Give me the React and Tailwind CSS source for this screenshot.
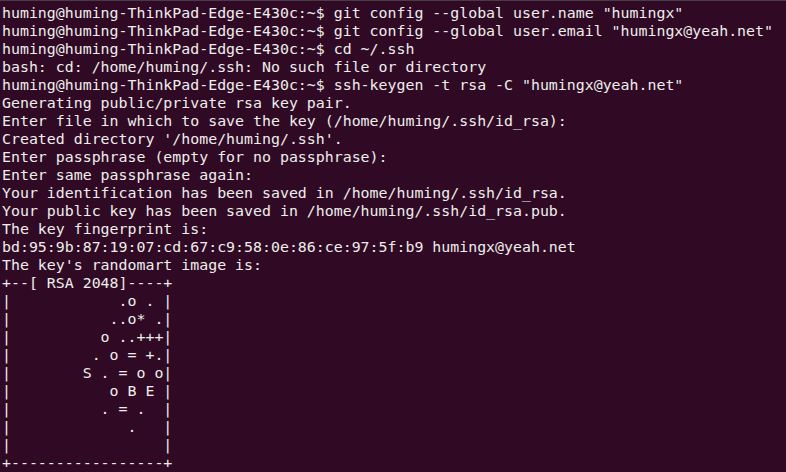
import React from 'react';

const lines = [
  'huming@huming-ThinkPad-Edge-E430c:~$ git config --global user.name "humingx"',
  'huming@huming-ThinkPad-Edge-E430c:~$ git config --global user.email "humingx@yeah.net"',
  'huming@huming-ThinkPad-Edge-E430c:~$ cd ~/.ssh',
  'bash: cd: /home/huming/.ssh: No such file or directory',
  'huming@huming-ThinkPad-Edge-E430c:~$ ssh-keygen -t rsa -C "humingx@yeah.net"',
  'Generating public/private rsa key pair.',
  'Enter file in which to save the key (/home/huming/.ssh/id_rsa):',
  "Created directory '/home/huming/.ssh'.",
  'Enter passphrase (empty for no passphrase):',
  'Enter same passphrase again:',
  'Your identification has been saved in /home/huming/.ssh/id_rsa.',
  'Your public key has been saved in /home/huming/.ssh/id_rsa.pub.',
  'The key fingerprint is:',
  'bd:95:9b:87:19:07:cd:67:c9:58:0e:86:ce:97:5f:b9 humingx@yeah.net',
  "The key's randomart image is:",
  '+--[ RSA 2048]----+',
  '|            .o . |',
  '|           ..o* .|',
  '|          o ..+++|',
  '|         . o = +.|',
  '|        S . = o o|',
  '|           o B E |',
  '|          . = .  |',
  '|             .   |',
  '|                 |',
  '+-----------------+',
];

export default function App() {
  return (
    <div className="w-[786px] h-[472px] overflow-hidden bg-[#300a24] border-t border-[#4a3a45]">
      {/* terminal output */}
      <pre className="pl-[2px] pt-[3px] text-[#eeeeec] text-[14.9px] leading-[18px] font-['DejaVu_Sans_Mono',monospace] whitespace-pre">
        {lines.map((line, i) => (
          <div key={i}>{line}</div>
        ))}
      </pre>
    </div>
  );
}
